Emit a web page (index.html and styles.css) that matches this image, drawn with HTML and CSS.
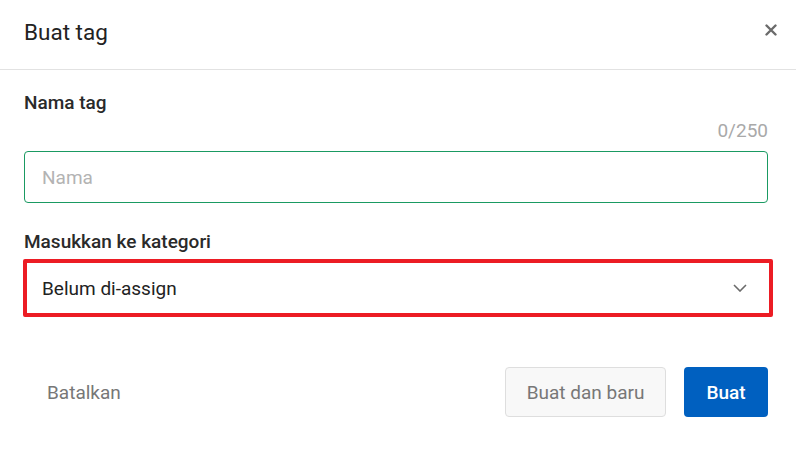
FILE: index.html
```html
<!DOCTYPE html>
<html lang="id">
<head>
<meta charset="utf-8">
<title>Buat tag</title>
<link rel="stylesheet" href="styles.css">
</head>
<body>
<div class="dialog">
  <header class="dialog-header">
    <h1 class="dialog-title">Buat tag</h1>
    <button class="close-btn" aria-label="Tutup">
      <svg width="12" height="12" viewBox="0 0 12 12"><path d="M1.5 1.5L10.5 10.5M10.5 1.5L1.5 10.5" stroke="#6b6b6b" stroke-width="2.4" stroke-linecap="round"/></svg>
    </button>
  </header>
  <div class="dialog-body">
    <label class="field-label">Nama tag</label>
    <div class="counter">0/250</div>
    <div class="text-input"><span class="placeholder">Nama</span></div>
    <label class="field-label label-cat">Masukkan ke kategori</label>
    <div class="select">
      <span class="select-value">Belum di-assign</span>
      <svg class="chevron" width="14" height="8" viewBox="0 0 14 8"><path d="M1 1L7 7L13 1" fill="none" stroke="#6b6b6b" stroke-width="1.6"/></svg>
    </div>
  </div>
  <footer class="dialog-footer">
    <button class="btn btn-text">Batalkan</button>
    <div class="actions">
      <button class="btn btn-secondary">Buat dan baru</button>
      <button class="btn btn-primary">Buat</button>
    </div>
  </footer>
</div>
</body>
</html>
```

FILE: styles.css
```css
* { box-sizing: border-box; }
html, body { margin: 0; padding: 0; background: #fff; }
body {
  font-family: Roboto, "Liberation Sans", Arial, sans-serif;
  color: #222;
  width: 796px;
  height: 454px;
  overflow: hidden;
}
.dialog { display: flex; flex-direction: column; }
.dialog-header {
  height: 70px;
  display: flex;
  align-items: center;
  justify-content: space-between;
  padding: 0 19px 6px 24px;
  border-bottom: 1px solid #e2e2e2;
}
.dialog-title {
  margin: 0;
  font-size: 22.5px;
  font-weight: 400;
  color: #222;
  line-height: 28px;
}
.close-btn {
  border: 0;
  background: none;
  padding: 0;
  margin-top: -4px;
  width: 12px;
  height: 12px;
  display: flex;
  cursor: pointer;
}
.dialog-body {
  padding: 20px 28px 0 24px;
  display: flex;
  flex-direction: column;
}
.field-label {
  font-size: 19px;
  font-weight: 500;
  line-height: 26px;
  color: #2a2a2a;
}
.counter {
  text-align: right;
  font-size: 19px;
  line-height: 24px;
  color: #a9a9a9;
  margin-top: 3px;
  margin-bottom: 8px;
}
.text-input {
  height: 52px;
  border: 1px solid #1a9a62;
  border-radius: 4px;
  display: flex;
  align-items: center;
  padding-left: 17px;
}
.placeholder { font-size: 19px; color: #b3b3b3; }
.label-cat { margin-top: 26px; }
.select {
  margin-top: 4px;
  margin-left: -1px;
  margin-right: -5px;
  height: 58px;
  border: 4px solid #ec1c24;
  border-radius: 2px;
  display: flex;
  align-items: center;
  justify-content: space-between;
  padding: 0 22px 0 15px;
}
.select-value { font-size: 19px; color: #222; }
.chevron { display: block; }
.dialog-footer {
  margin-top: 50px;
  padding: 0 28px 0 24px;
  display: flex;
  align-items: center;
  justify-content: space-between;
}
.actions { display: flex; gap: 18px; }
.btn {
  font-family: inherit;
  font-size: 19px;
  height: 50px;
  border-radius: 4px;
  cursor: pointer;
}
.btn-text {
  border: 0;
  background: none;
  color: #777;
  padding: 0 23px;
}
.btn-secondary {
  width: 161px;
  background: #f8f8f8;
  border: 1px solid #dedede;
  color: #777;
}
.btn-primary {
  width: 84px;
  background: #0060c0;
  border: 0;
  color: #fff;
  font-weight: 500;
}
```
